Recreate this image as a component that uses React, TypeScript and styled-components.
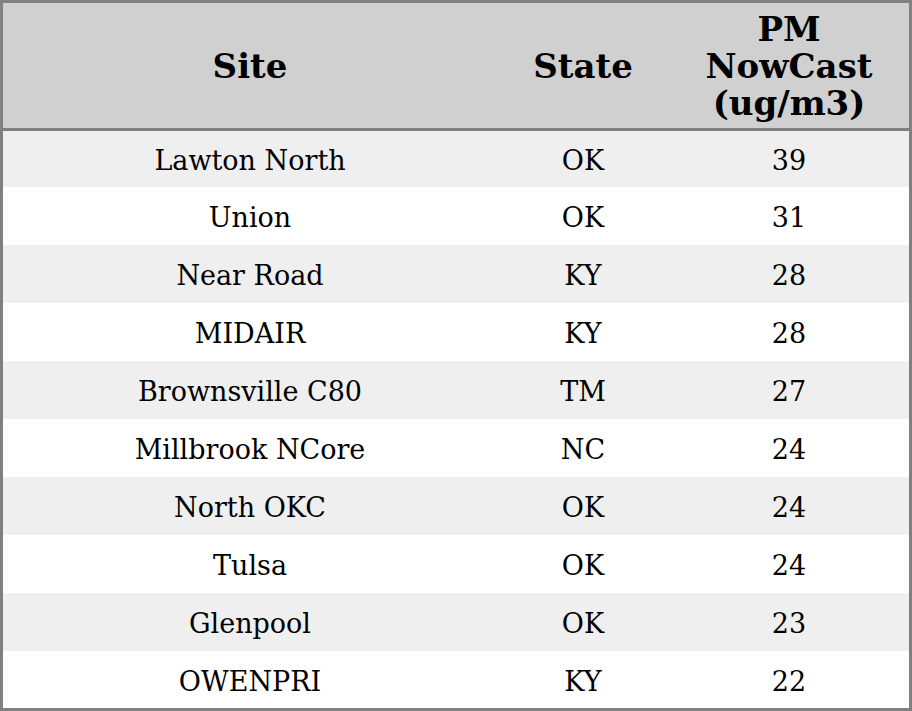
import React from "react";
import styled, { createGlobalStyle } from "styled-components";

interface SiteRow {
  site: string;
  state: string;
  value: number;
}

const rows: SiteRow[] = [
  { site: "Lawton North", state: "OK", value: 39 },
  { site: "Union", state: "OK", value: 31 },
  { site: "Near Road", state: "KY", value: 28 },
  { site: "MIDAIR", state: "KY", value: 28 },
  { site: "Brownsville C80", state: "TM", value: 27 },
  { site: "Millbrook NCore", state: "NC", value: 24 },
  { site: "North OKC", state: "OK", value: 24 },
  { site: "Tulsa", state: "OK", value: 24 },
  { site: "Glenpool", state: "OK", value: 23 },
  { site: "OWENPRI", state: "KY", value: 22 },
];

export default function App() {
  return (
    <>
      <GlobalStyle />
      <Table>
        <colgroup>
          <col style={{ width: 494 }} />
          <col style={{ width: 172 }} />
          <col style={{ width: 240 }} />
        </colgroup>
        <thead>
          <tr>
            <HeadCell>Site</HeadCell>
            <HeadCell>State</HeadCell>
            <HeadCell>
              PM
              <br />
              NowCast
              <br />
              (ug/m3)
            </HeadCell>
          </tr>
        </thead>
        <tbody>
          {rows.map((r, i) => (
            <Row key={r.site} $odd={i % 2 === 0}>
              <Cell>{r.site}</Cell>
              <Cell>{r.state}</Cell>
              <Cell>{r.value}</Cell>
            </Row>
          ))}
        </tbody>
      </Table>
    </>
  );
}

const GlobalStyle = createGlobalStyle`
  html, body {
    margin: 0;
    padding: 0;
    background: #ffffff;
  }
  body {
    font-family: "DejaVu Serif", serif;
    color: #000000;
  }
`;

const Table = styled.table`
  width: 912px;
  border-collapse: separate;
  border-spacing: 0;
  table-layout: fixed;
  border: 3px solid #808080;
  box-sizing: border-box;
`;

const HeadCell = styled.th`
  height: 123px;
  padding: 2px 0 0;
  background: #d0d0d0;
  border-bottom: 3px solid #808080;
  font-size: 34px;
  font-weight: bold;
  line-height: 37px;
  text-align: center;
  vertical-align: middle;
`;

const Cell = styled.td`
  height: 54px;
  padding: 4px 0 0;
  font-size: 27px;
  line-height: 32px;
  text-align: center;
  vertical-align: middle;
`;

const Row = styled.tr<{ $odd: boolean }>`
  background: ${(p) => (p.$odd ? "#efefef" : "#ffffff")};

  &:first-child ${Cell} {
    height: 52px;
  }
  &:last-child ${Cell} {
    height: 53px;
  }
`;
